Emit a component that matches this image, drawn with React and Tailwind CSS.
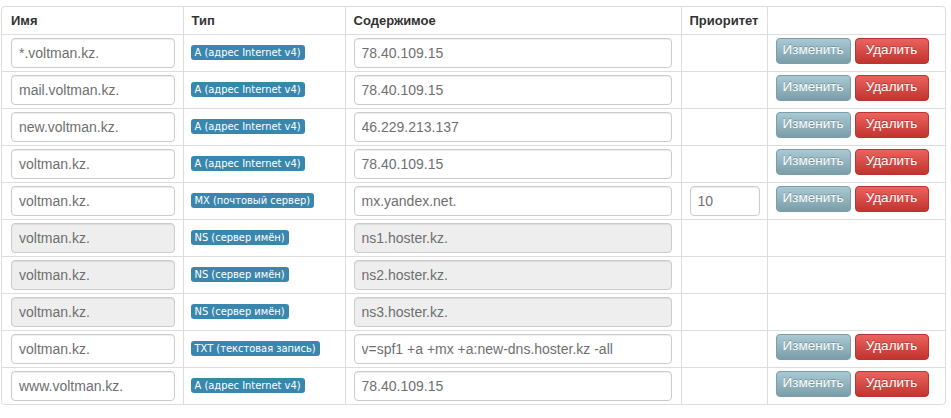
const rows = [
  { name: '*.voltman.kz.', type: 'A (адрес Internet v4)', content: '78.40.109.15', editable: true },
  { name: 'mail.voltman.kz.', type: 'A (адрес Internet v4)', content: '78.40.109.15', editable: true },
  { name: 'new.voltman.kz.', type: 'A (адрес Internet v4)', content: '46.229.213.137', editable: true },
  { name: 'voltman.kz.', type: 'A (адрес Internet v4)', content: '78.40.109.15', editable: true },
  { name: 'voltman.kz.', type: 'MX (почтовый сервер)', content: 'mx.yandex.net.', priority: '10', editable: true },
  { name: 'voltman.kz.', type: 'NS (сервер имён)', content: 'ns1.hoster.kz.', editable: false },
  { name: 'voltman.kz.', type: 'NS (сервер имён)', content: 'ns2.hoster.kz.', editable: false },
  { name: 'voltman.kz.', type: 'NS (сервер имён)', content: 'ns3.hoster.kz.', editable: false },
  { name: 'voltman.kz.', type: 'TXT (текстовая запись)', content: 'v=spf1 +a +mx +a:new-dns.hoster.kz -all', editable: true },
  { name: 'www.voltman.kz.', type: 'A (адрес Internet v4)', content: '78.40.109.15', editable: true },
];

function Field({ value, width, disabled }) {
  return (
    <input
      readOnly
      value={value}
      disabled={disabled}
      className={`h-[30px] ${width} rounded-[4px] border border-[#cccccc] px-[7px] text-[14px] text-[#6f6f6f] shadow-[inset_0_1px_1px_rgba(0,0,0,0.075)] outline-none ${
        disabled ? 'bg-[#eeeeee]' : 'bg-white'
      }`}
    />
  );
}

export default function App() {
  return (
    <div className="min-h-screen bg-white pl-[1px] pr-[5px] pt-[6px] font-['Liberation_Sans',Arial,sans-serif]">
      <div className="overflow-hidden rounded-[4px] border border-[#dddddd]">
        <table className="w-full table-fixed border-collapse text-[13px] text-[#333333]">
          <thead>
            <tr className="h-[27px] text-left">
              <th className="w-[181px] px-[9px] font-bold">Имя</th>
              <th className="w-[162px] border-l border-[#dddddd] px-[8px] font-bold">Тип</th>
              <th className="w-[336px] border-l border-[#dddddd] px-[8px] font-bold">Содержимое</th>
              <th className="w-[86px] border-l border-[#dddddd] px-[8px] font-bold">Приоритет</th>
              <th className="border-l border-[#dddddd]"></th>
            </tr>
          </thead>
          <tbody>
            {rows.map((r, i) => (
              <tr key={i} className="h-[37px] border-t border-[#dddddd] align-top">
                <td className="px-[9px] pt-[3px]">
                  <Field value={r.name} width="w-[164px]" disabled={!r.editable} />
                </td>
                <td className="border-l border-[#dddddd] px-[7px] pt-[7px]">
                  <span className="inline-block h-[15px] rounded-[3px] bg-[#3a87ad] px-[4px] font-['DejaVu_Sans_Condensed','DejaVu_Sans',sans-serif] text-[11px] leading-[15px] text-white">
                    {r.type}
                  </span>
                </td>
                <td className="border-l border-[#dddddd] px-[8px] pt-[3px]">
                  <Field value={r.content} width="w-[318px]" disabled={!r.editable} />
                </td>
                <td className="border-l border-[#dddddd] px-[8px] pt-[3px]">
                  {r.priority && <Field value={r.priority} width="w-[70px]" />}
                </td>
                <td className="border-l border-[#dddddd] px-[8px] pt-[3px]">
                  {r.editable && (
                    <div className="flex gap-[4px]">
                      <button className="h-[26px] w-[75px] rounded-[4px] border border-[#7d9ea9] bg-gradient-to-b from-[#a9c9d3] to-[#7a9ea9] text-[13.5px] text-white [text-shadow:0_-1px_0_rgba(0,0,0,0.25)]">
                        Изменить
                      </button>
                      <button className="h-[26px] w-[74px] rounded-[4px] border border-[#b93530] bg-gradient-to-b from-[#eb625e] to-[#c2332e] text-[13.5px] text-white [text-shadow:0_-1px_0_rgba(0,0,0,0.25)]">
                        Удалить
                      </button>
                    </div>
                  )}
                </td>
              </tr>
            ))}
          </tbody>
        </table>
      </div>
    </div>
  );
}
